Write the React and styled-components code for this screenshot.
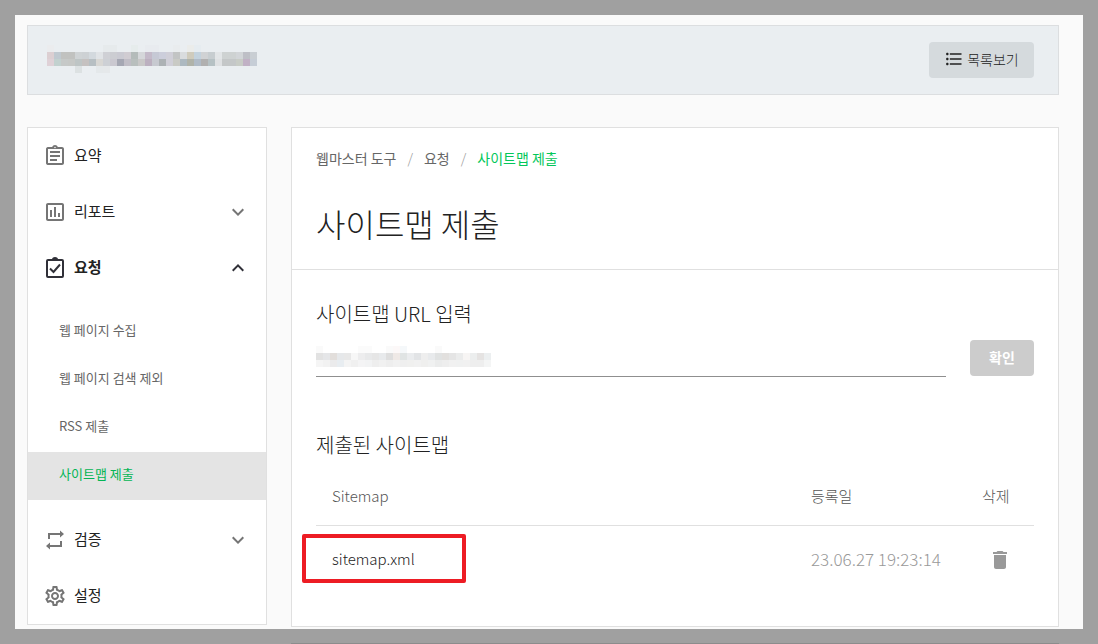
import React from "react";
import styled, { createGlobalStyle } from "styled-components";
import {
  MdOutlineAssignment,
  MdOutlineAssessment,
  MdOutlineSettings,
  MdFormatListBulleted,
  MdDelete,
  MdExpandMore,
  MdExpandLess,
} from "react-icons/md";

const GlobalStyle = createGlobalStyle`
  *, *::before, *::after { box-sizing: border-box; }
  body {
    margin: 0;
    background: #a0a0a0;
    color: #222;
    font-family: "Noto Sans CJK KR", "Noto Sans", sans-serif;
    font-weight: 300;
  }
  button, input { font: inherit; color: inherit; }
  a { color: inherit; text-decoration: none; }
`;

const Frame = styled.div`
  padding: 15px 15px 0;
`;

const Page = styled.div`
  display: flex;
  flex-direction: column;
  gap: 32px;
  padding: 10px 24px 2px 12px;
  background: #fafafa;
`;

const SiteBar = styled.header`
  display: flex;
  align-items: center;
  justify-content: space-between;
  height: 70px;
  padding: 0 24px 0 19px;
  background: #eaeef1;
  border: 1px solid #dcdee0;
`;

const SiteName = styled.div`
  display: flex;
  padding-bottom: 2px;
`;

const ListButton = styled.button`
  display: flex;
  align-items: center;
  justify-content: center;
  gap: 3px;
  width: 105px;
  height: 36px;
  padding: 0 0 2px;
  border: 0;
  border-radius: 4px;
  background: #d5dadd;
  font-size: 14px;
  line-height: 20px;
`;

const Columns = styled.div`
  display: flex;
  align-items: flex-start;
  gap: 24px;
`;

const Sidebar = styled.nav`
  flex: 0 0 240px;
  background: #fff;
  border: 1px solid #e0e0e0;
`;

const MenuItem = styled.a`
  display: flex;
  align-items: center;
  gap: 7px;
  height: 56px;
  padding: 0 16px 0 15px;
  font-size: 15px;
  line-height: 24px;
  color: #222;
  font-weight: ${(p) => (p.$open ? 700 : 400)};
  svg { color: ${(p) => (p.$open ? "#303038" : "#757575")}; flex: none; }
`;

const MenuLabel = styled.span`
  flex: 1;
  padding-bottom: 2px;
`;

const SubMenu = styled.div`
  padding: 12px 0;
`;

const SubItem = styled.a`
  display: flex;
  align-items: center;
  height: 48px;
  padding: 0 31px 5px;
  font-size: 13px;
  font-weight: 400;
  color: ${(p) => (p.$active ? "#03b554" : "#666")};
  background: ${(p) => (p.$active ? "#e4e4e4" : "transparent")};
`;

const Panel = styled.main`
  flex: 1;
  min-width: 0;
  background: #fff;
  border: 1px solid #e0e0e0;
`;

const PanelHead = styled.div`
  display: flex;
  flex-direction: column;
  gap: 31px;
  padding: 19px 24px 22px;
  border-bottom: 1px solid #e0e0e0;
`;

const Crumbs = styled.nav`
  display: flex;
  gap: 11px;
  font-size: 14px;
  line-height: 22px;
  color: #666;
`;

const Crumb = styled.a`
  font-weight: 400;
  color: ${(p) => (p.$current ? "#03c75a" : "#666")};
`;

const Slash = styled.span`
  color: #999;
`;

const Title = styled.h1`
  margin: 0;
  font-size: 32px;
  line-height: 47px;
  font-weight: 300;
`;

const PanelBody = styled.div`
  padding: 32px 24px 34px;
`;

const Heading = styled.h2`
  display: block;
  margin: 0;
  font-size: 20px;
  line-height: 24px;
  font-weight: 300;
`;

const UrlForm = styled.form`
  display: flex;
  gap: 24px;
  margin: 14px 0 56px;
`;

const UrlField = styled.div`
  position: relative;
  flex: 1;
  svg { position: absolute; left: 0; top: 6px; pointer-events: none; }
`;

const UrlInput = styled.input`
  display: block;
  width: 100%;
  height: 37px;
  padding: 0;
  border: 0;
  border-bottom: 1px solid #8f8f8f;
  background: transparent;
  outline: 0;
  font-size: 14px;
`;

const SubmitButton = styled.button`
  width: 64px;
  height: 36px;
  padding: 0 0 2px;
  border: 0;
  border-radius: 4px;
  background: #ccc;
  color: #fff;
  font-size: 14px;
  line-height: 20px;
  font-weight: 700;
`;

const Table = styled.table`
  width: 100%;
  margin-top: 10px;
  border-collapse: separate;
  border-spacing: 0;
  table-layout: fixed;
  font-size: 15px;
  line-height: 24px;
`;

const HeadCell = styled.th`
  width: ${(p) => p.$width || "auto"};
  height: 59px;
  padding: 0 0 0 16px;
  border-bottom: 1px solid #e0e0e0;
  text-align: left;
  font-weight: 300;
  color: #555;
`;

const Cell = styled.td`
  position: relative;
  height: 66px;
  padding: 0 0 0 16px;
  color: ${(p) => (p.$muted ? "#999" : "#222")};
  font-size: ${(p) => (p.$muted ? "17px" : "15px")};
`;

const IconCell = styled(Cell)`
  padding: 0;
  text-align: center;
`;

const DeleteButton = styled.button`
  display: inline-flex;
  padding: 0;
  border: 0;
  background: none;
  color: #999;
  vertical-align: middle;
`;

const Highlight = styled.span`
  position: absolute;
  left: -14px;
  top: 8px;
  width: 164px;
  height: 49px;
  border: 4px solid #ed1c24;
  border-radius: 2px;
  pointer-events: none;
`;

const NextPanel = styled.div`
  margin: 14px 24px 0 276px;
  border-top: 1px solid #8c8c8c;
`;

const SITE_CELLS = [
  "ebecee - - - - - - - e6eaec e6eaec - - e6ecec - e8ebef e8ebef - - e9ecee - ebecea e6ecf0 - - - - - - - -",
  "dccfd2 c0c9d0 c1c2c0 c1c2c0 cfd3d5 cdd1d4 d3d9de e0e3e6 cfd0d5 cccdd2 cacad2 d0ccd2 b4bbba d5d7da c4bac9 c6c9d5 cccedb d0cfd8 c2c4c4 d9dcde cfcbbc c3d2dd d0d2d4 c7cdd0 e2e5e7 ced2d2 ced2d2 d2d5d8 bebfc6 c9ced3",
  "dfd1d7 c2d1cf c6c9c8 c6c8c6 bec5c5 c5c1c0 b7bfc3 d8d7d4 cdd0d5 cac8d0 a5a7b3 c0bdc6 b9bfbe c9c8c8 bcb0c0 c7c9d0 adb2b5 d0cfd8 c9cac5 adb9c1 b0b3aa b0bbc7 b1b0b0 b6c1c4 dfe1e3 c4c7c8 c4c7c8 c8ccc6 c1b1c5 c6cdd6",
  "- - - - dce1e2 - - e4e8ea e5e8ea - - - - - - - - - - - - - - - - - - - - -",
];

const INPUT_CELLS = [
  "fafafa - - - - - fbfbfb fbfbfb - - fafafa fcf8f8 f5f8fa - - - - fafafa - - - - - - -",
  "e2e2e2 e5e6e8 e2dedb e6e8ea e8e8e8 f7f7f7 ededee e8e9ea e6e6e6 e8eaec dedede efe9e6 e0e4e4 eaecee e2e4e6 eeeeee e8eaec e0e2e2 e2e0de e5e5e5 ebecec f7f5f4 eceeee e5e3e2 eceff0",
  "f5f5f5 f2f2f2 ebebec e8edf1 f4f4f4 f0f0f0 f4f4f5 f2f3f4 eeeeee f1f1f1 eeeeee f1f1f1 efefef f0f0ef f1f1f1 efefee f0f1f1 ebecec eeeeee f1f1f1 f0f1f1 f1f1f1 eeeeee eeeeee f4f5f5",
];

/* Masked address, drawn as a mosaic of 7px blocks. */
function Mosaic({ rows, label }) {
  const grid = rows.map((r) => r.split(" "));
  const columns = grid[grid.length - 1].length;
  return (
    <svg
      role="img"
      aria-label={label}
      width={columns * 7}
      height={rows.length * 7}
      shapeRendering="crispEdges"
    >
      {grid.map((row, y) =>
        row.map((c, x) =>
          c === "-" ? null : (
            <rect key={x + "-" + y} x={x * 7} y={y * 7} width="7" height="7" fill={"#" + c} />
          )
        )
      )}
    </svg>
  );
}

function ClipboardCheckIcon() {
  return (
    <svg width="24" height="24" viewBox="0 0 24 24" fill="none" stroke="currentColor" strokeWidth="2" aria-hidden="true">
      <rect x="4" y="4" width="16" height="17" rx="1" />
      <path d="M9 3.5a3 2.6 0 0 1 6 0z" fill="currentColor" stroke="none" />
      <path d="M7 12.5l3.5 3.5 6.5-7.5" />
    </svg>
  );
}

function LoopIcon() {
  return (
    <svg width="24" height="24" viewBox="0 0 24 24" fill="none" stroke="currentColor" strokeWidth="2" aria-hidden="true">
      <path d="M6 11V6h12M18 13v5H6" />
      <path d="M17 2.5L21 6l-4 3.5zM7 14.5L3 18l4 3.5z" fill="currentColor" stroke="none" />
    </svg>
  );
}

export default function App() {
  return (
    <>
      <GlobalStyle />
      <Frame>
        <Page>
          <SiteBar>
            <SiteName>
              <Mosaic rows={SITE_CELLS} label="사이트 주소" />
            </SiteName>
            <ListButton type="button">
              <MdFormatListBulleted size={20} aria-hidden="true" />
              목록보기
            </ListButton>
          </SiteBar>
          <Columns>
            <Sidebar>
              <MenuItem href="#summary">
                <MdOutlineAssignment size={24} />
                <MenuLabel>요약</MenuLabel>
              </MenuItem>
              <MenuItem href="#report">
                <MdOutlineAssessment size={24} />
                <MenuLabel>리포트</MenuLabel>
                <MdExpandMore size={24} />
              </MenuItem>
              <MenuItem href="#request" $open>
                <ClipboardCheckIcon />
                <MenuLabel>요청</MenuLabel>
                <MdExpandLess size={24} />
              </MenuItem>
              <SubMenu>
                <SubItem href="#crawl">웹 페이지 수집</SubItem>
                <SubItem href="#exclude">웹 페이지 검색 제외</SubItem>
                <SubItem href="#rss">RSS 제출</SubItem>
                <SubItem href="#sitemap" $active>사이트맵 제출</SubItem>
              </SubMenu>
              <MenuItem href="#verify">
                <LoopIcon />
                <MenuLabel>검증</MenuLabel>
                <MdExpandMore size={24} />
              </MenuItem>
              <MenuItem href="#settings">
                <MdOutlineSettings size={24} />
                <MenuLabel>설정</MenuLabel>
              </MenuItem>
            </Sidebar>
            <Panel>
              <PanelHead>
                <Crumbs>
                  <Crumb href="#tools">웹마스터 도구</Crumb>
                  <Slash>/</Slash>
                  <Crumb href="#request">요청</Crumb>
                  <Slash>/</Slash>
                  <Crumb href="#sitemap" $current>사이트맵 제출</Crumb>
                </Crumbs>
                <Title>사이트맵 제출</Title>
              </PanelHead>
              <PanelBody>
                <Heading as="label" htmlFor="sitemap-url">사이트맵 URL 입력</Heading>
                <UrlForm>
                  <UrlField>
                    <UrlInput id="sitemap-url" type="text" />
                    <Mosaic rows={INPUT_CELLS} label="입력 주소" />
                  </UrlField>
                  <SubmitButton type="button">확인</SubmitButton>
                </UrlForm>
                <Heading>제출된 사이트맵</Heading>
                <Table>
                  <thead>
                    <tr>
                      <HeadCell>Sitemap</HeadCell>
                      <HeadCell $width="171px">등록일</HeadCell>
                      <HeadCell $width="68px">삭제</HeadCell>
                    </tr>
                  </thead>
                  <tbody>
                    <tr>
                      <Cell>
                        sitemap.xml
                        <Highlight />
                      </Cell>
                      <Cell $muted>23.06.27 19:23:14</Cell>
                      <IconCell>
                        <DeleteButton type="button" aria-label="삭제">
                          <MdDelete size={24} />
                        </DeleteButton>
                      </IconCell>
                    </tr>
                  </tbody>
                </Table>
              </PanelBody>
            </Panel>
          </Columns>
        </Page>
        <NextPanel />
      </Frame>
    </>
  );
}
